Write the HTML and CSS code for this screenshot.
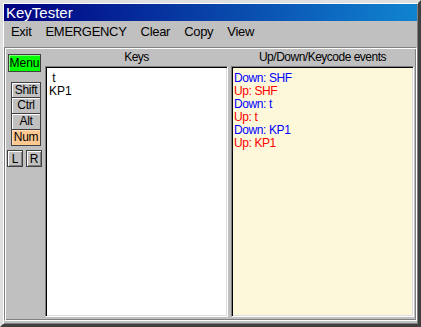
FILE: index.html
```html
<!DOCTYPE html>
<html lang="en">
<head>
  <meta charset="UTF-8">
  <title>KeyTester</title>
  <link rel="stylesheet" href="styles.css">
</head>
<body>
  <div class="window">
    <div class="titlebar">KeyTester</div>

    <!-- menu -->
    <div class="menubar">
      <span class="menu-item">Exit</span>
      <span class="menu-item">EMERGENCY</span>
      <span class="menu-item">Clear</span>
      <span class="menu-item">Copy</span>
      <span class="menu-item">View</span>
    </div>

    <div class="frame">
      <!-- left buttons -->
      <div class="sidebar">
        <div class="menu-btn">Menu</div>
        <div class="mods">
          <div class="mod">Shift</div>
          <div class="mod">Ctrl</div>
          <div class="mod">Alt</div>
          <div class="mod mod-on">Num</div>
        </div>
        <div class="sides">
          <div class="side">L</div>
          <div class="side">R</div>
        </div>
      </div>

      <div class="column">
        <div class="col-title">Keys</div>
        <div class="box keys">
          <div class="line">&nbsp;t</div>
          <div class="line">KP1</div>
        </div>
      </div>

      <div class="column">
        <div class="col-title">Up/Down/Keycode events</div>
        <div class="box events">
          <div class="line down">Down: SHF</div>
          <div class="line up">Up: SHF</div>
          <div class="line down">Down: t</div>
          <div class="line up">Up: t</div>
          <div class="line down">Down: KP1</div>
          <div class="line up">Up: KP1</div>
        </div>
      </div>
    </div>
  </div>
</body>
</html>
```

FILE: styles.css
```css
* { margin: 0; padding: 0; box-sizing: border-box; }
body { background: #c0c0c0; font-family: "Liberation Sans", Arial, sans-serif; font-size: 12px; color: #000; }

/* window */
.window { width: 421px; height: 327px; background: #c0c0c0; padding: 1px; display: flex; flex-direction: column;
  border: 3px solid; border-color: #dfdfdf #404040 #404040 #dfdfdf; box-shadow: inset 1px 1px 0 #fff, inset -1px -1px 0 #808080; }
.titlebar { height: 17px; line-height: 17px; padding-left: 2px; color: #fff; font-size: 15px;
  background: linear-gradient(90deg, #000080, #1084d0); }
.menubar { height: 20px; display: flex; align-items: center; gap: 14px; padding-left: 7px; font-size: 13px; letter-spacing: -0.3px; }

/* main frame */
.frame { flex: 1; margin-top: 6px; margin-bottom: 2px; display: flex; padding: 0 1px 3px 0;
  border: 1px solid; border-color: #808080 #fff #fff #808080; box-shadow: inset 1px 1px 0 #fff, inset -1px -1px 0 #808080; }

.sidebar { width: 40px; padding: 6px 0 0 3px; }
.menu-btn { width: 33px; height: 18px; line-height: 17px; text-align: center; background: #00ff00;
  border: 1px solid #404040; box-shadow: inset 1px 1px 0 #80ff80; }
.mods { margin: 10px 0 0 3px; width: 30px; }
.mod { height: 16px; line-height: 15px; text-align: center; background: #c0c0c0;
  border: 1px solid #404040; box-shadow: inset 1px 1px 0 #fff; letter-spacing: -0.3px; }
.mod + .mod { border-top: none; }
.mod-on { background: #ffc890; box-shadow: inset 1px 1px 0 #ffe0c0; }
.sides { display: flex; gap: 3px; margin-top: 4px; margin-left: -1px; }
.side { width: 16px; height: 17px; line-height: 16px; text-align: center; background: #c0c0c0;
  border: 1px solid #404040; box-shadow: inset 1px 1px 0 #fff, inset -1px -1px 0 #808080; }

.column { width: 183px; display: flex; flex-direction: column; }
.column + .column { margin-left: 3px; }
.col-title { height: 18px; line-height: 19px; text-align: center; letter-spacing: -0.5px; }
.box { flex: 1; padding: 5px 2px; border: 1px solid; border-color: #808080 #fff #fff #808080;
  box-shadow: inset 1px 1px 0 #000, inset -1px -1px 0 #dfdfdf; }
.keys { background: #fff; padding-left: 3px; }
.events { background: #fdf8da; letter-spacing: -0.4px; }
.line { height: 13px; line-height: 13px; }
.down { color: #0000ff; }
.up { color: #ff0000; }
```
